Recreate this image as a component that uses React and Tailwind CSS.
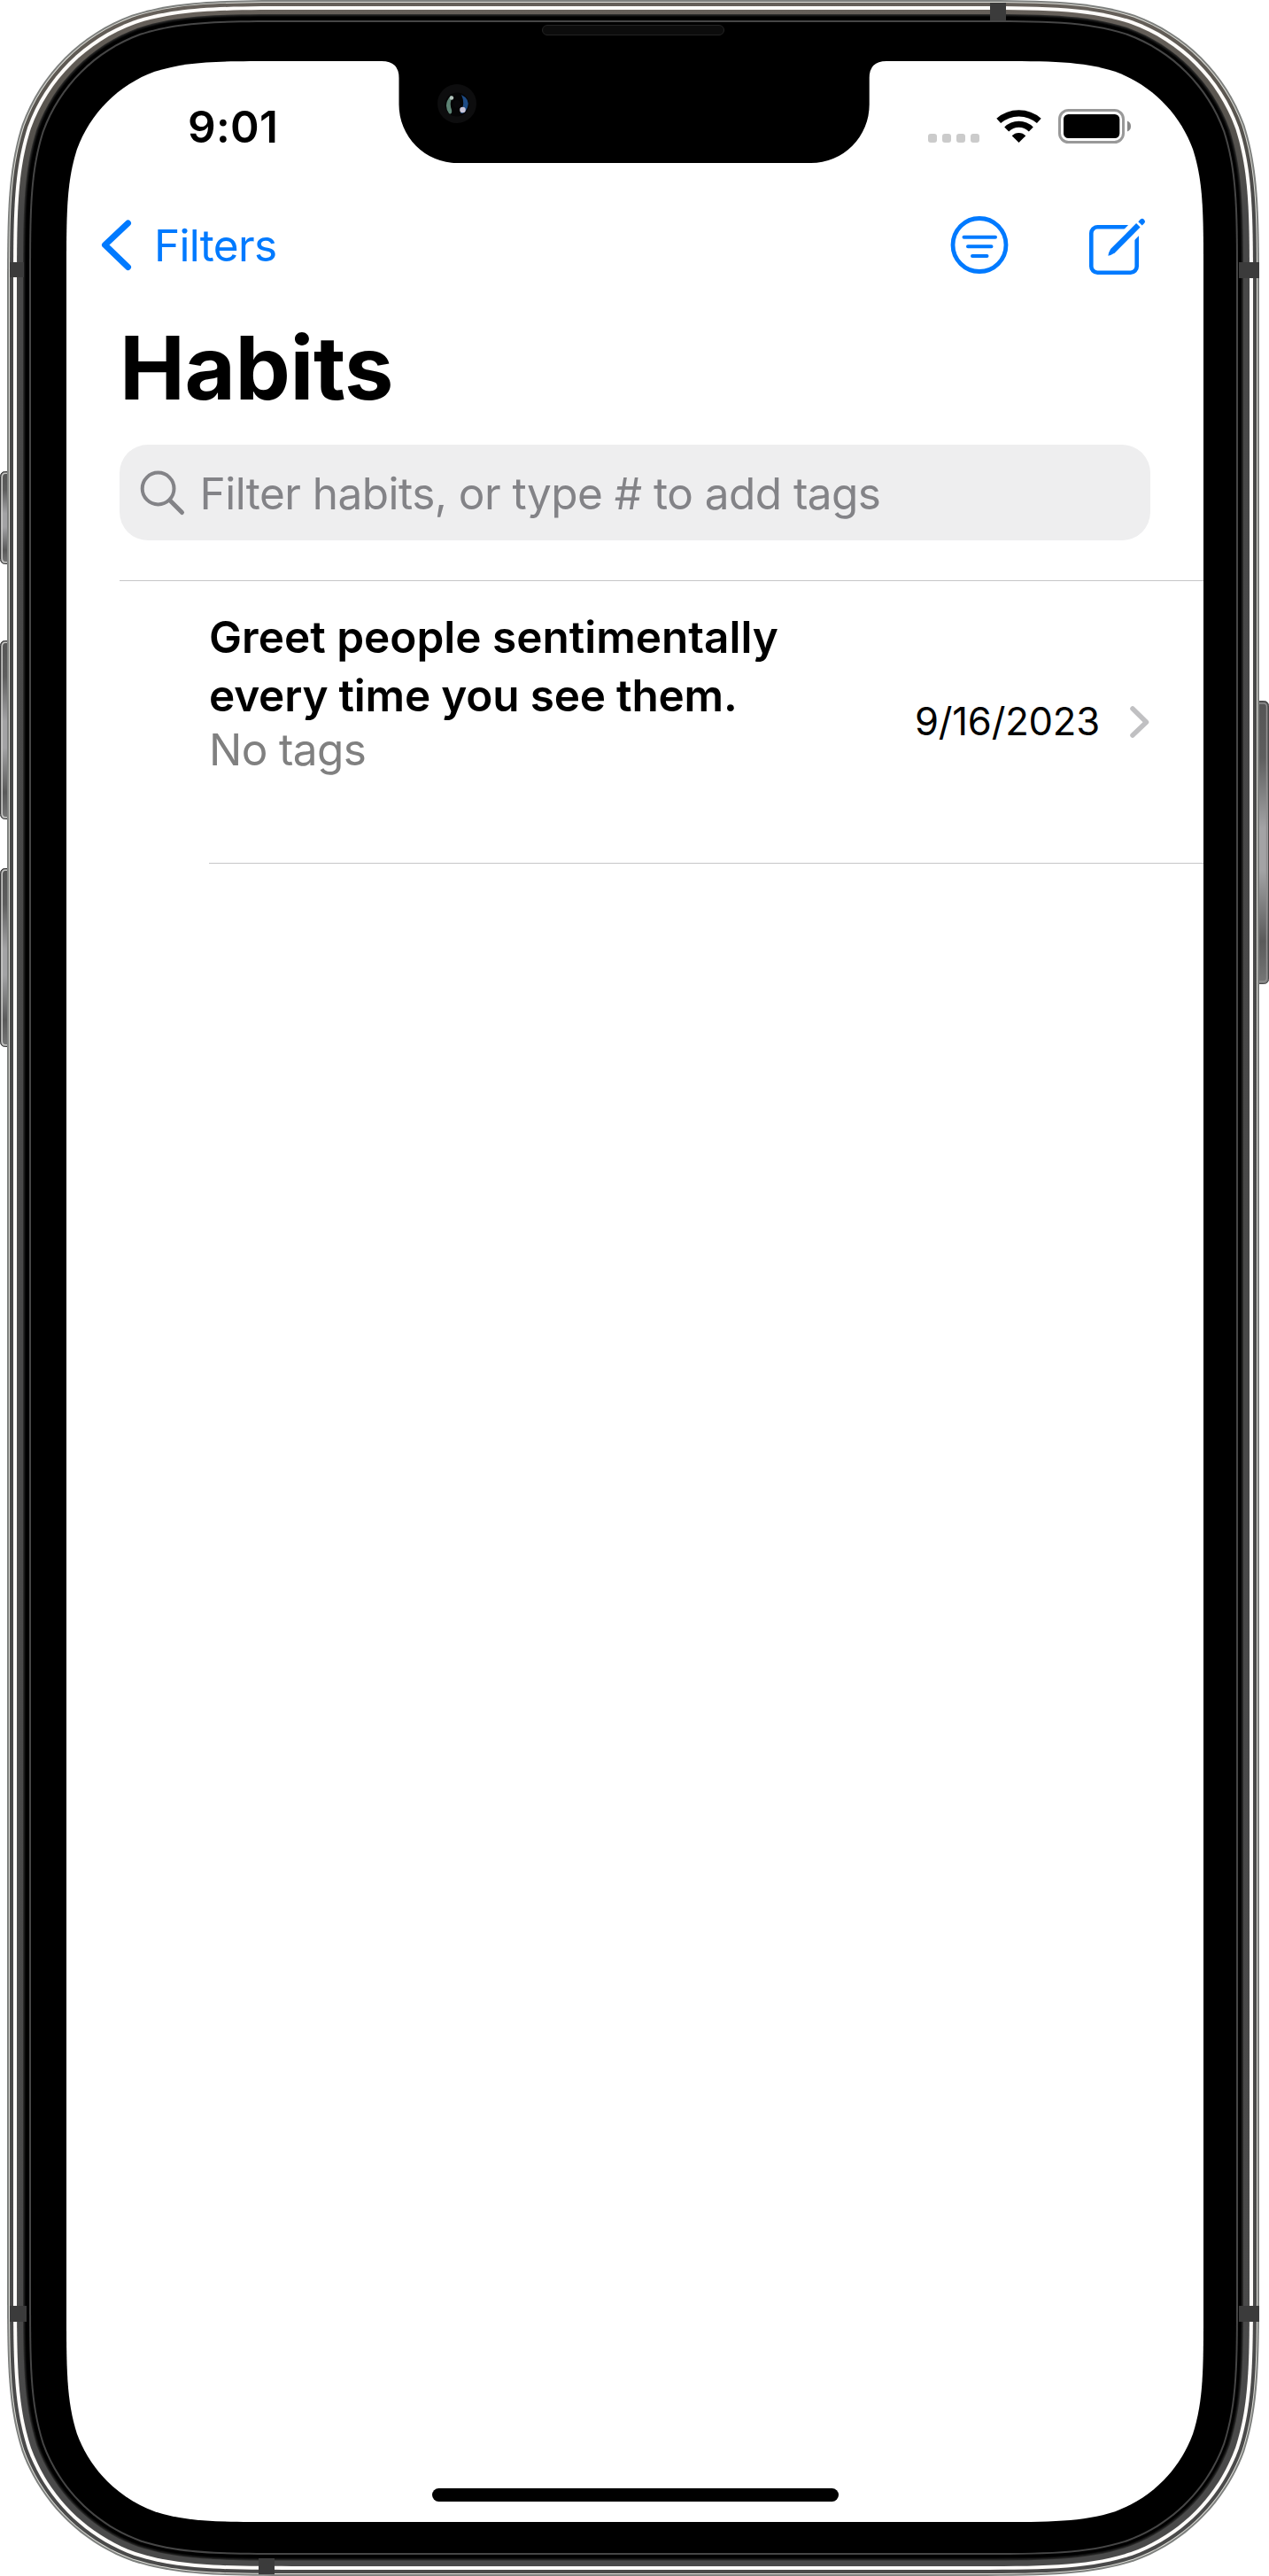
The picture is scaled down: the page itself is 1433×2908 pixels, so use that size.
import React from "react";

/* Rounded rectangle with continuous-curvature corners, given by its four edges. */
function squircle(l, t, r, b, R) {
  const k = (n) => n * R;
  const A = 1.528665, B = 1.088493, C = 0.868407, D = 0.631494, E = 0.074911, F = 0.372824, G = 0.16906;
  return [
    `M${l + k(A)} ${t}`,
    `L${r - k(A)} ${t}`,
    `C${r - k(B)} ${t} ${r - k(C)} ${t} ${r - k(D)} ${t + k(E)}`,
    `C${r - k(F)} ${t + k(G)} ${r - k(G)} ${t + k(F)} ${r - k(E)} ${t + k(D)}`,
    `C${r} ${t + k(C)} ${r} ${t + k(B)} ${r} ${t + k(A)}`,
    `L${r} ${b - k(A)}`,
    `C${r} ${b - k(B)} ${r} ${b - k(C)} ${r - k(E)} ${b - k(D)}`,
    `C${r - k(G)} ${b - k(F)} ${r - k(F)} ${b - k(G)} ${r - k(D)} ${b - k(E)}`,
    `C${r - k(C)} ${b} ${r - k(B)} ${b} ${r - k(A)} ${b}`,
    `L${l + k(A)} ${b}`,
    `C${l + k(B)} ${b} ${l + k(C)} ${b} ${l + k(D)} ${b - k(E)}`,
    `C${l + k(F)} ${b - k(G)} ${l + k(G)} ${b - k(F)} ${l + k(E)} ${b - k(D)}`,
    `C${l} ${b - k(C)} ${l} ${b - k(B)} ${l} ${b - k(A)}`,
    `L${l} ${t + k(A)}`,
    `C${l} ${t + k(B)} ${l} ${t + k(C)} ${l + k(E)} ${t + k(D)}`,
    `C${l + k(G)} ${t + k(F)} ${l + k(F)} ${t + k(G)} ${l + k(D)} ${t + k(E)}`,
    `C${l + k(C)} ${t} ${l + k(B)} ${t} ${l + k(A)} ${t}Z`,
  ].join("");
}

/* left, top, right, bottom, radius, fill — outermost layer first */
const FRAME_LAYERS = [
  [8, 0, 1422, 2908, 223, "#7e807e"],
  [10, 2, 1420, 2906, 221, "#dcdcd6"],
  [11, 3, 1419, 2905, 220, "url(#steel)"],
  [15, 7, 1415, 2901, 216, "#fdfbf9"],
  [19, 11, 1411, 2897, 212, "url(#steel)"],
  [26, 16, 1404, 2890.5, 206, "#2c2c2b"],
  [27, 17, 1403, 2889.5, 205, "#1a1a1a"],
  [28, 18, 1402, 2888.5, 204, "#0a0a0a"],
  [29, 19, 1401, 2887.5, 203, "#000"],
  [33, 23, 1398, 2884, 198, "#464646"],
  [35, 25, 1396, 2882, 196, "#000"],
  [75, 69, 1359, 2847, 158, "#fff"],
];

const SIDE_BUTTONS = [
  [0.5, 532, 105],
  [0.5, 723, 202],
  [0.5, 980, 202],
];

const ANTENNA_BANDS = [
  [11, 296, 16, 17],
  [11, 2603, 19, 18],
  [1399, 296, 23, 18],
  [1399, 2603, 23, 18],
  [1118, 3, 18, 20],
  [292, 2888, 18, 18],
];

function PhoneFrame() {
  return (
    <svg className="absolute inset-0" width="1433" height="2908" viewBox="0 0 1433 2908" aria-hidden="true">
      <defs>
        <linearGradient id="steel" x1="0" y1="0" x2="0" y2="1">
          <stop offset="0" stopColor="#66605a" />
          <stop offset="0.04" stopColor="#59554f" />
          <stop offset="0.08" stopColor="#484848" />
          <stop offset="1" stopColor="#4a4a4a" />
        </linearGradient>
        <linearGradient id="button" x1="0" y1="0" x2="0" y2="1">
          <stop offset="0" stopColor="#555" />
          <stop offset="0.2" stopColor="#5e5e5e" />
          <stop offset="0.45" stopColor="#a3a3a5" />
          <stop offset="0.6" stopColor="#a3a3a5" />
          <stop offset="0.85" stopColor="#5a5a5a" />
          <stop offset="1" stopColor="#777" />
        </linearGradient>
      </defs>
      {SIDE_BUTTONS.map(([x, y, h]) => (
        <g key={y}>
          <rect x={x} y={y + 0.5} width="16" height={h - 1} rx="5" fill="url(#button)" stroke="#3c3c3c" />
          <path d={`M9 ${y + 2.2}H6Q2.2 ${y + 2.2} 2.2 ${y + 7}V${y + h - 7}Q2.2 ${y + h - 2.2} 6 ${y + h - 2.2}H9`} fill="none" stroke="#c6c6c4" strokeWidth="1.6" />
        </g>
      ))}
      <rect x="1416" y="791.5" width="16.5" height="319" rx="5" fill="url(#button)" stroke="#4a4a4a" />
      <path d="M1421 794H1427Q1430.500 794 1430.500 798V1104Q1430.500 1108 1427 1108H1421" fill="none" stroke="#909090" strokeWidth="1.4" />
      {FRAME_LAYERS.map(([l, t, r, b, R, fill]) => (
        <path key={l} d={squircle(l, t, r, b, R)} fill={fill} />
      ))}
      {ANTENNA_BANDS.map(([x, y, w, h]) => (
        <rect key={`${x}-${y}`} x={x} y={y} width={w} height={h} fill="#3b3b3b" />
      ))}
      {/* notch */}
      <path d="M431 68H1001V69Q981.700 69 981.700 88V118A66 66 0 0 1 915.700 184H516.500A66 66 0 0 1 450.500 118V88Q450.500 69 431 69Z" fill="#000" />
      <rect x="612.5" y="28.500" width="205" height="11" rx="5.500" fill="#0c0c0c" stroke="#232323" />
      <circle cx="516" cy="117" r="22" fill="#0d0d0e" />
      <circle cx="516" cy="118" r="13.500" fill="#050506" />
      <path d="M509 108Q500 118 507 128Q511 130 510 124Q507 116 511 109Z" fill="#5d8374" />
      <path d="M521 107Q531 112 528 121Q525 129 520 128Q526 117 521 107Z" fill="#1d4b85" />
      <circle cx="510" cy="110.500" r="2.200" fill="#b4c4bd" />
      <circle cx="522.500" cy="124" r="3.300" fill="#c9c6da" />
      <circle cx="516" cy="117.500" r="4.500" fill="#08080a" />
    </svg>
  );
}

function StatusBar() {
  return (
    <div className="flex h-[131px] items-start pl-[137px] pr-[82px]">
      <span className="mt-[44px] text-[49.5px] font-semibold leading-[60px] tracking-[0.3px]">9:01</span>
      <div className="ml-auto mt-[54px] flex h-[39px] gap-[19px]">
        <div className="flex items-end gap-[6px] pb-px">
          {[0, 1, 2, 3].map((i) => (
            <span key={i} className="size-[10px] rounded-[3px] bg-[#cbcbcb]" />
          ))}
        </div>
        <svg width="51" height="39" viewBox="0 0 51 39">
          <g fill="none" stroke="#000">
            <path d="M2.700 13.400A34.500 34.500 0 0 1 48.300 13.400" strokeWidth="7.200" />
            <path d="M11.700 23A19.500 19.500 0 0 1 39.300 23" strokeWidth="7" />
          </g>
          <path d="M25.500 38L17.700 30.300A10.600 10.600 0 0 1 33.300 30.300Z" />
        </svg>
        <svg width="82" height="39" viewBox="0 0 82 39">
          <rect x="1.500" y="1.500" width="72" height="36" rx="10" fill="none" stroke="#999" strokeWidth="3" />
          <rect x="6" y="6" width="63.300" height="27" rx="5.500" />
          <path d="M78 13.500Q82 15 82 19.500T78 25.500Z" fill="#888" />
        </svg>
      </div>
    </div>
  );
}

function NavBar() {
  return (
    <div className="flex h-[154px] items-center pl-[37px] text-[#007aff]">
      <svg width="40" height="64" viewBox="0 0 40 64" fill="none" stroke="currentColor" strokeWidth="7" strokeLinecap="round" strokeLinejoin="round">
        <path d="M32.500 7L6.500 31.500L32.500 56.500" />
      </svg>
      <span className="ml-[22px] text-[49.5px] leading-[60px] tracking-[-0.69px]">Filters</span>
      <svg className="ml-auto" width="66" height="66" viewBox="0 0 66 66" fill="none" stroke="currentColor" strokeLinecap="round">
        <circle cx="33" cy="32.500" r="30" strokeWidth="4.800" />
        <path d="M15.500 23.700H51M20 34.300H46.500M25 45H41.500" strokeWidth="4" />
      </svg>
      <svg className="ml-[88px] mr-[64px] overflow-visible" width="68" height="66" viewBox="0 0 68 66" fill="none" stroke="currentColor">
        <rect x="5.300" y="12.300" width="51.400" height="51.400" rx="7" strokeWidth="4.600" />
        <path d="M36 33.150L70 -0.850" stroke="#fff" strokeWidth="17" />
        <path d="M24.300 44.700Q24.800 41 27.200 37.100L56.100 8L60.600 12.500L31.800 41.500Q28 44 24.300 44.700Z" fill="currentColor" stroke="none" />
        <path d="M58.300 6.300L61 3.500Q63 2 65 4T65.400 7.700L62.700 10.500Z" fill="currentColor" stroke="none" />
      </svg>
    </div>
  );
}

function SearchField() {
  return (
    <div className="ml-[60px] mt-[27px] flex h-[108px] w-[1164px] items-center rounded-[32px] bg-[#eeeeef] pl-[22px] text-[#838387]">
      <svg width="54" height="54" viewBox="0 0 54 54" fill="none" stroke="currentColor" strokeLinecap="round">
        <circle cx="21.600" cy="22.500" r="17.900" strokeWidth="4" />
        <path d="M35 36L48.500 49.500" strokeWidth="5" />
      </svg>
      <span className="ml-[14.500px] mt-[2px] whitespace-nowrap text-[49.5px] leading-[60px] tracking-[-0.54px]">
        Filter habits, or type # to add tags
      </span>
    </div>
  );
}

function HabitRow({ title, tags, date }) {
  return (
    <div className="ml-[161px] flex h-[319px] border-b border-[#c6c6c8]">
      <div className="flex flex-col pt-[30px] text-[49.5px]">
        <span className="font-semibold leading-[66px]">{title[0]}</span>
        <span className="font-semibold leading-[66px] tracking-[-0.2px]">{title[1]}</span>
        <span className="-mt-[2px] leading-[60px] tracking-[-0.63px] text-[#808080]">{tags}</span>
      </div>
      <div className="ml-auto flex items-center pr-[60px]">
        <span className="text-[43.6px] leading-[54px] tracking-[-0.2px]">{date}</span>
        <svg className="ml-[31px]" width="26" height="40" viewBox="0 0 26 40" fill="none" stroke="#c0c0c2" strokeWidth="5.500" strokeLinecap="round" strokeLinejoin="round">
          <path d="M6 5L21.500 20.300L6 35" />
        </svg>
      </div>
    </div>
  );
}

export default function App() {
  return (
    <div className="relative h-[2908px] w-[1433px] overflow-hidden bg-white font-['Inter',sans-serif] text-black">
      <PhoneFrame />
      <main className="relative ml-[75px] flex h-[2847px] w-[1284px] flex-col pt-[69px]">
        <StatusBar />
        <NavBar />
        <h1 className="ml-[60px] mt-px text-[99px] font-bold leading-[120px] tracking-[-0.44px]">Habits</h1>
        <SearchField />
        <div className="ml-[60px] mt-[45px] h-px shrink-0 bg-[#c6c6c8]" />
        <HabitRow title={["Greet people sentimentally", "every time you see them."]} tags="No tags" date="9/16/2023" />
        <div className="mb-[23px] ml-[413px] mt-auto h-[15px] w-[459px] shrink-0 rounded-full bg-black" />
      </main>
    </div>
  );
}
